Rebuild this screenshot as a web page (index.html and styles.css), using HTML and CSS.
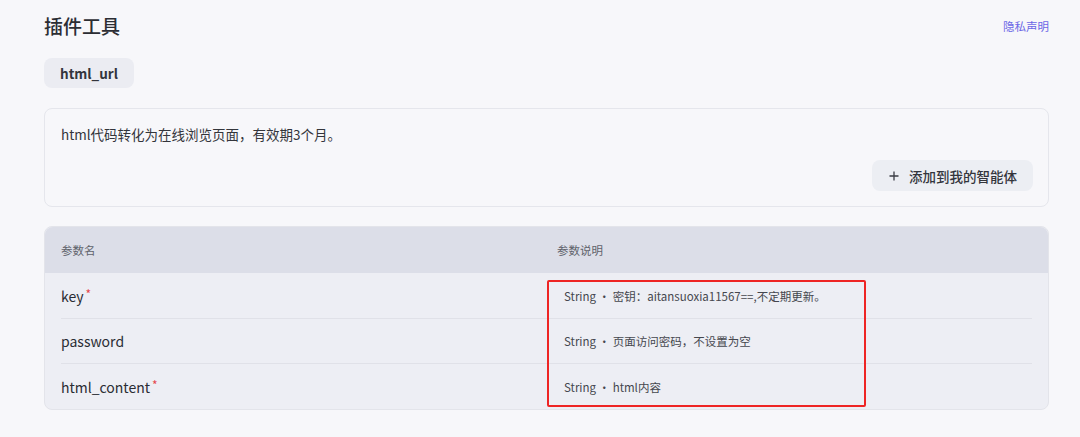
FILE: index.html
```html
<!DOCTYPE html>
<html lang="zh-CN">
<head>
<meta charset="utf-8">
<title>插件工具</title>
<link rel="stylesheet" href="styles.css">
</head>
<body>
<div class="page">
  <div class="head">
    <h1 class="title">插件工具</h1>
    <a class="privacy">隐私声明</a>
  </div>
  <div class="tag">html_url</div>
  <div class="card">
    <p class="desc">html代码转化为在线浏览页面，有效期3个月。</p>
    <div class="actions">
      <button class="add-btn"><svg class="plus" viewBox="0 0 10 10" width="10" height="10"><path d="M5 0.5V9.5M0.5 5H9.5" stroke="#3a3c44" stroke-width="1.3" fill="none"/></svg><span>添加到我的智能体</span></button>
    </div>
  </div>
  <div class="table">
    <div class="thead">
      <div class="th">参数名</div>
      <div class="th">参数说明</div>
    </div>
    <div class="tbody">
      <div class="tr">
        <div class="name">key<span class="req">*</span></div>
        <div class="val">String · 密钥：aitansuoxia11567==,不定期更新。</div>
      </div>
      <div class="tr">
        <div class="name">password</div>
        <div class="val">String · 页面访问密码，不设置为空</div>
      </div>
      <div class="tr">
        <div class="name">html_content<span class="req">*</span></div>
        <div class="val">String · html内容</div>
      </div>
    </div>
    <div class="highlight"></div>
  </div>
</div>
</body>
</html>
```

FILE: styles.css
```css
* { box-sizing: border-box; }
html, body {
  margin: 0;
  padding: 0;
  background: #f7f7fa;
}
body {
  font-family: "Noto Sans CJK SC", "Noto Sans", sans-serif;
  color: #2f3137;
}
.page {
  padding: 12px 31px 0 44px;
}
.head {
  display: flex;
  align-items: center;
  justify-content: space-between;
  height: 28px;
}
.title {
  margin: 0;
  font-size: 19px;
  line-height: 28px;
  font-weight: 500;
  color: #2b2d33;
}
.privacy {
  font-size: 11.5px;
  color: #6b67e6;
  line-height: 28px;
}
.tag {
  display: inline-flex;
  align-items: center;
  height: 30px;
  margin-top: 18px;
  padding: 0 16px;
  background: #ebecf2;
  border-radius: 8px;
  font-size: 13.5px;
  font-weight: 600;
  color: #33353c;
}
.card {
  margin-top: 20px;
  border: 1px solid #e5e6ec;
  border-radius: 8px;
  padding: 15px 15px 15px 16px;
  background: #f7f7fa;
}
.desc {
  margin: 0;
  font-size: 13.5px;
  line-height: 20px;
  color: #33353b;
}
.actions {
  display: flex;
  justify-content: flex-end;
  margin-top: 16px;
}
.add-btn {
  display: inline-flex;
  align-items: center;
  gap: 10px;
  height: 31px;
  padding: 0 16px 0 17px;
  border: none;
  border-radius: 8px;
  background: #eceef3;
  font-family: inherit;
  font-size: 13.5px;
  font-weight: 500;
  color: #33353c;
}
.plus { display: block; }
.table {
  position: relative;
  margin-top: 19px;
  border: 1px solid #e3e4ea;
  border-radius: 8px;
  background: #edeef4;
}
.thead {
  display: grid;
  grid-template-columns: 496px 1fr;
  align-items: center;
  height: 46px;
  padding: 0 16px;
  background: #dcdee8;
  border-radius: 8px 8px 0 0;
}
.th {
  font-size: 11.5px;
  color: #60636b;
}
.tbody {
  padding: 0 16px;
}
.tr {
  display: grid;
  grid-template-columns: 496px 1fr;
  align-items: center;
  height: 45px;
}
.tr + .tr {
  border-top: 1px solid #e0e1e8;
}
.tr:last-child { height: 46px; }
.name {
  font-size: 14px;
  font-weight: 400;
  color: #2a2c33;
}
.req {
  color: #e5484d;
  font-size: 12px;
  margin-left: 2px;
  vertical-align: 3px;
}
.val {
  padding-left: 7px;
  font-size: 11.5px;
  color: #45474e;
}
.highlight {
  position: absolute;
  left: 502px;
  top: 53px;
  width: 319px;
  height: 127px;
  border: 2px solid #ee2424;
  border-radius: 2px;
  pointer-events: none;
}
```
